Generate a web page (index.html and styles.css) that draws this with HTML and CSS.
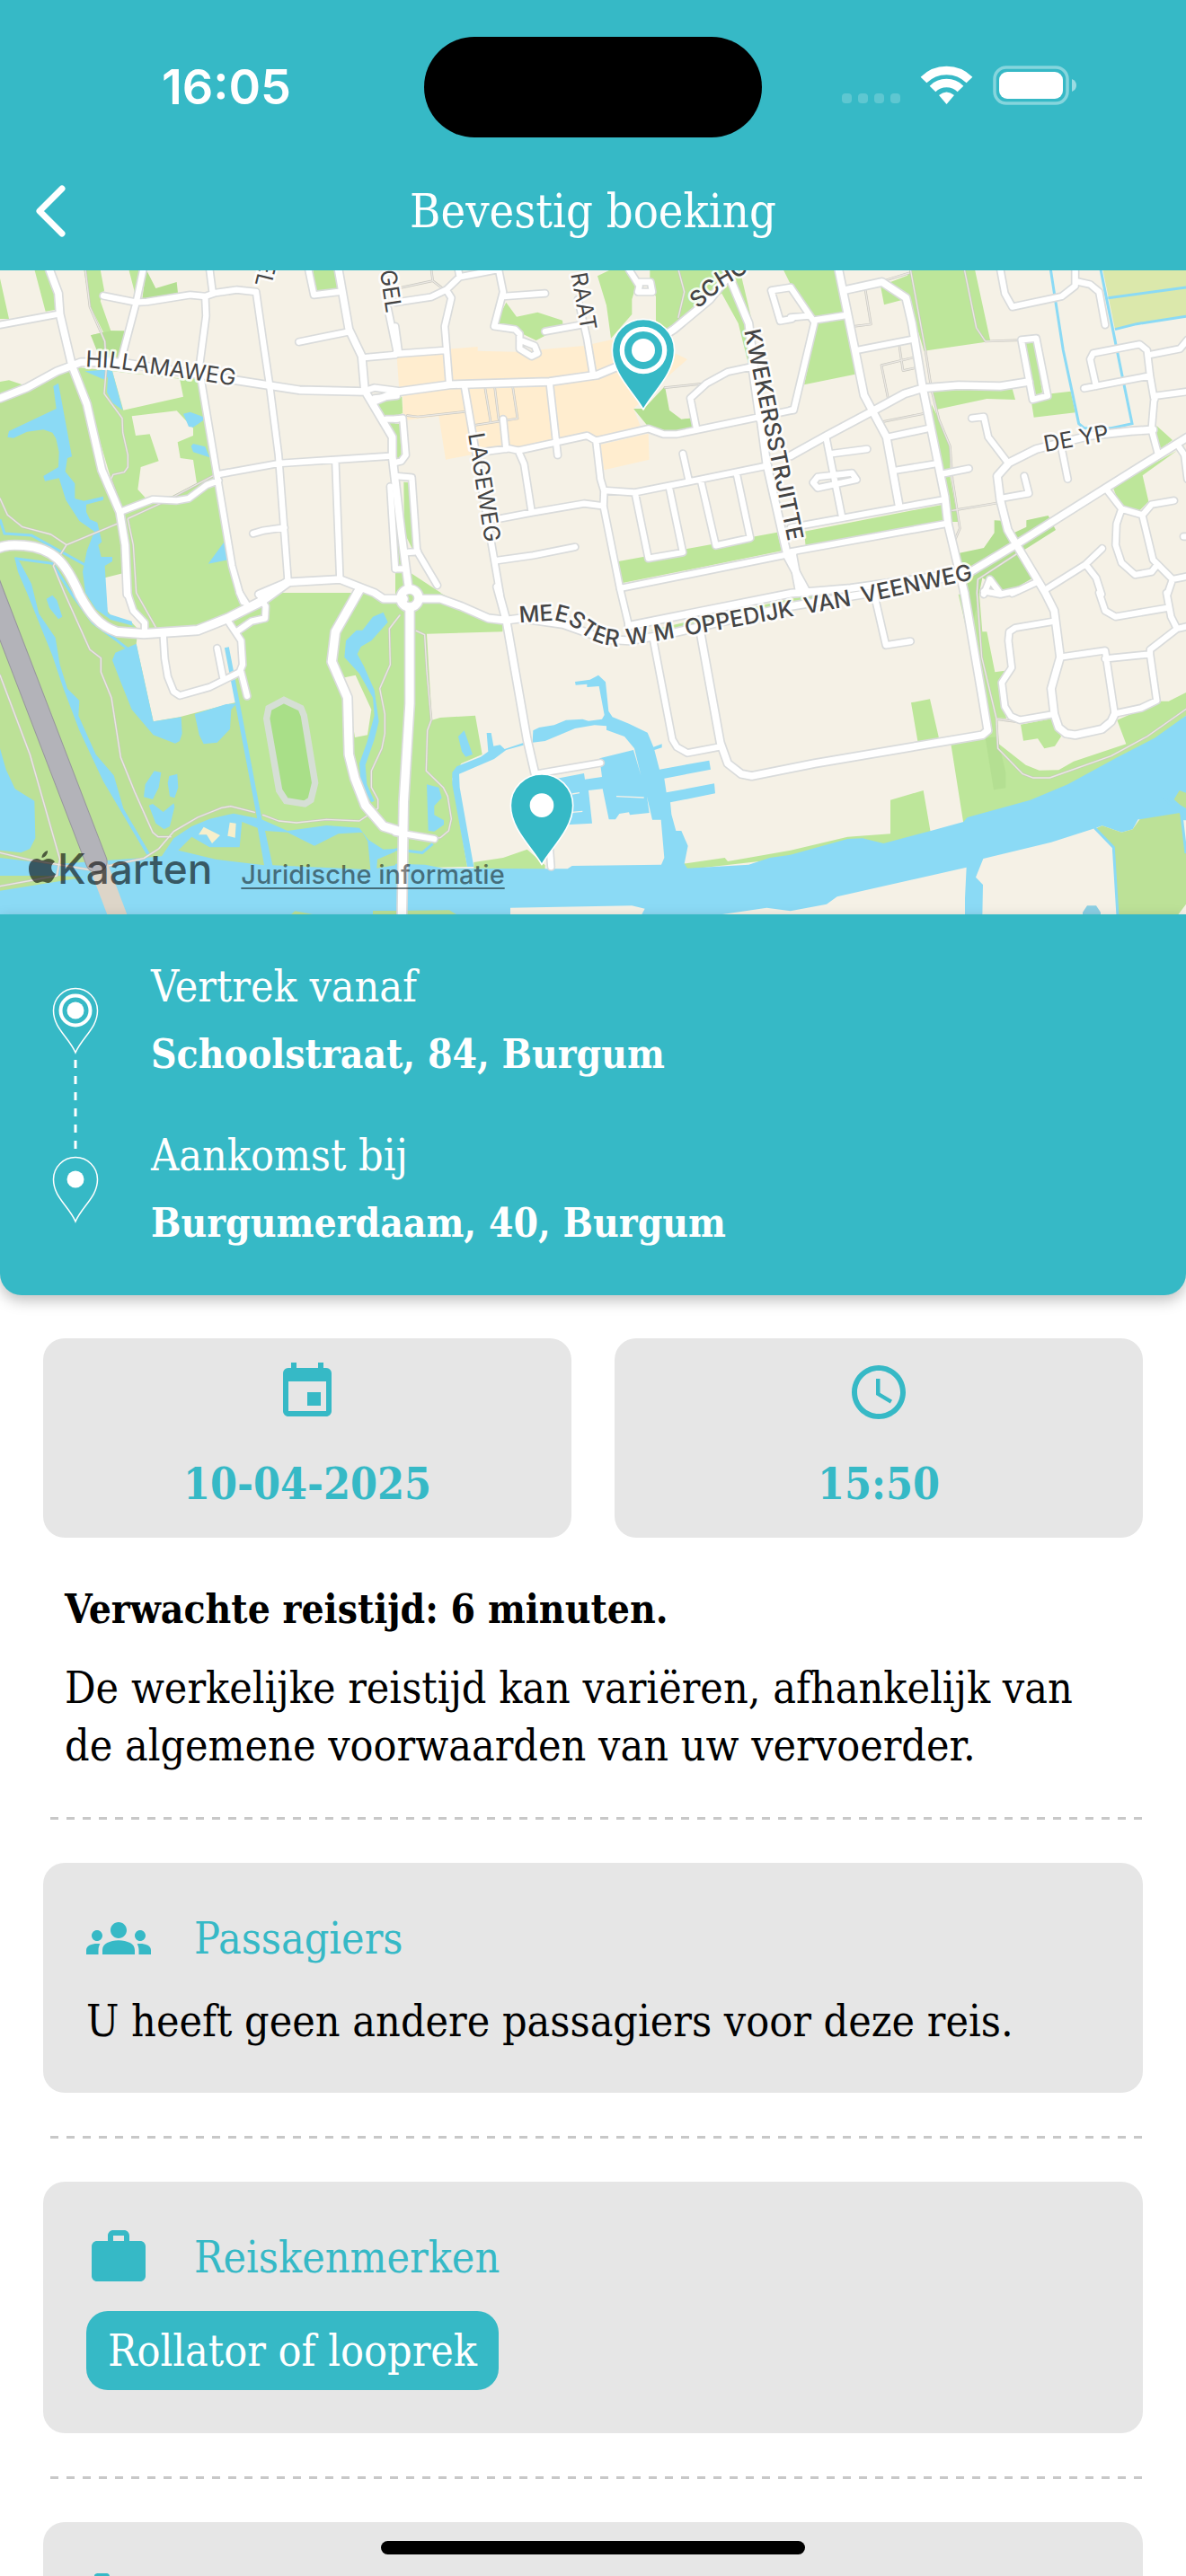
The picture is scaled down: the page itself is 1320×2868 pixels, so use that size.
FILE: index.html
```html
<!DOCTYPE html>
<html lang="nl">
    <head>
        <meta charset="UTF-8">
        <meta name="viewport" content="width=device-width, initial-scale=1.0">
        <title>Bevestig boeking</title>
        <link rel="stylesheet" href="styles.css">
    </head>
    <body>
        <div class="screen">
            <header class="header">
                <div class="status">
                    <span class="status-time">16:05</span>
                    <span class="island"></span>
                    <svg class="status-icons" viewBox="0 0 262 44" aria-hidden="true">
                        <g fill="#fff" opacity=".2">
                            <rect x="0" y="31" width="11" height="11" rx="4"/>
                            <rect x="18" y="31" width="11" height="11" rx="4"/>
                            <rect x="36" y="31" width="11" height="11" rx="4"/>
                            <rect x="54" y="31" width="11" height="11" rx="4"/>
                        </g>
                        <g fill="none" stroke="#fff" stroke-width="9.500">
                            <path d="M91 16A36 36 0 0 1 142 16"/>
                            <path d="M101 26A22 22 0 0 1 132 26"/>
                        </g>
                        <path d="M116.500 43L108 33Q116.500 26 125 33z" fill="#fff"/>
                        <rect x="170" y="2" width="81" height="40" rx="13" fill="none" stroke="#fff" stroke-width="3.500" opacity=".4"/>
                        <rect x="175" y="7" width="71" height="30" rx="9" fill="#fff"/>
                        <path d="M256 15Q261 17 261 22T256 29z" fill="#fff" opacity=".5"/>
                    </svg>
                </div>
                <div class="nav">
                    <button class="back" aria-label="Terug">
                        <svg viewBox="0 0 36 60"><path d="M31 5L6 30L31 55" fill="none" stroke="#fff" stroke-width="7" stroke-linecap="round" stroke-linejoin="round"/></svg>
                    </button>
                    <h1>Bevestig boeking</h1>
                </div>
            </header>

            <div class="map">
                <svg class="map-canvas" viewBox="0 3 3960 2151" role="img" aria-label="Kaart van Burgum">
                    <defs>
                        <!-- side streets -->
                        <g id="streets">
                            <path d="M0 185L190 150M478 0L455 110L405 300M345 88L455 110L490 108L635 85L685 90L720 78L790 68L855 75M700 0L710 78M685 90L688 155L665 330L690 480L725 690L775 990L800 1080L812 1110M855 75L880 250L900 385L930 620L962 1045M725 685L930 648L1310 623M400 810L510 768L590 772L630 765L690 720L730 705M845 882L880 872L950 862M1120 640L1135 1035M1030 0L1048 85L1130 75M998 242L1165 208M1208 295L1320 285M1220 405L1250 395L1325 405M1250 430L1325 422M1303 725L1320 1000M1295 130L1325 275M1290 500H1325M1190 1080L1180 1100"/>
                            <g transform="translate(1320 0)">
                                <path d="M0 110L120 92L170 68L215 25L345 0M215 25L210 0M170 68L187 95L165 190L180 380M0 190L12 280M0 282L165 270M345 0L360 75L330 190L400 200L415 215V265L455 290L475 280L465 255L415 235M360 90L500 80M500 207L620 185M610 100L640 230L660 350M230 385L255 530L320 910L350 1085M515 378L542 620M360 500L370 600M290 610L380 598L410 605L640 555L670 572L845 532L895 550L940 550L1325 470M410 605L430 650L455 810M335 835L455 812L630 782L695 790M670 572L685 700L697 740L695 790L750 1065L1330 948M697 738L800 745L1000 705L1245 655M800 745L845 965L960 945L915 730M1020 705L1070 922L1185 897L1140 685M960 615L980 705M340 972L460 955L600 927M780 0L815 55L810 75L858 75L852 42L815 42M1190 325L1110 342L1040 380L985 430L1005 530M1320 60L1255 70L1285 172L1325 165M1190 325L1215 500M0 500L25 497L35 620L20 640L0 645M0 690L55 695L72 940L140 1055M0 1000H35M40 945L75 942"/>
                            </g>
                            <g transform="translate(2640 0)">
                                <path d="M0 60L75 170L185 153M0 160L60 155M80 175L10 470H0M220 270L415 232M770 235L808 435L858 422L820 230zM118 560L172 830M140 615L255 600M75 712L90 693L205 680L220 702L90 730zM325 560L465 530M345 672L490 648M510 682L595 665M0 862L515 768M0 943L525 848M605 497L645 492L660 560L725 645M905 600L925 700M700 765L795 748L780 690M1225 610L1205 535L1213 440L1220 422L1325 408M1213 430L1200 355L1190 270L1165 250L1010 280L1000 300L1020 390M980 397L1200 355M1200 285L1300 265L1325 235M700 0L715 80L740 125L905 90L950 55V0M955 40L1000 50L1030 75L1050 185M1055 735L1105 800L1175 820L1205 785L1280 772M1105 800L1088 850L1085 920L1105 980L1150 1020L1205 1010L1225 985M1175 825L1210 970L1275 1035L1325 1025M1275 1035L1258 1085M850 1070L985 985L1040 932M985 985L1020 1030L1038 1085M1295 590L1315 620L1325 700M645 1085L665 1035L695 1075M740 1082L820 1045M1312 892H1330"/>
                            </g>
                            <g transform="translate(0 1080)">
                                <path d="M425 0L445 60L483 100V137M545 140L550 220L560 280L580 330L600 343L700 315L800 265L810 240L805 160L755 85M725 185L745 285M805 265L825 345M790 130L840 95L885 85L887 45L870 20M800 0L825 40"/>
                            </g>
                            <g transform="translate(1320 1080)">
                                <path d="M470 605L685 568M515 850L520 915M0 800L130 822M860 150L925 490L940 515L975 535L1080 515M750 -15L780 112"/>
                            </g>
                            <g transform="translate(2640 1080)">
                                <path d="M280 10L318 175L400 162M880 95L750 117L730 130L727 160L738 250L705 300L715 380L735 412L765 425L880 405M900 215L1050 193L1082 405M1050 220L1200 205L1222 360L1170 385L1085 403M1200 205V190L1290 120L1325 112M1290 120L1270 80L1255 0M1030 0L1050 60L1085 80L1260 50M645 -5L700 5L760 -8"/>
                            </g>
                        </g>
                        <!-- through roads -->
                        <g id="roads">
                            <path d="M165 0L195 80L200 150L240 320L290 450L340 670L400 810L418 920L425 1085M0 430L90 395L190 340L270 310H400L800 372L1000 403L1220 408M1130 0L1165 200L1208 290L1218 405L1310 560V625L1340 880L1365 1070M865 1085L960 1045L1135 1035L1250 1080L1280 1100H1350"/>
                            <g transform="translate(1320 0)">
                                <path d="M-70 440L0 410L180 385L515 375L675 352L740 325L930 200L1050 100L1130 0M1105 0L1130 60L1180 180L1200 350L1240 650L1310 960L1375 1080"/>
                            </g>
                            <g transform="translate(2640 0)">
                                <path d="M160 0L215 270L245 420L320 560L362 790M185 68L305 42L385 95L405 180L440 390L515 760L525 850L580 1080M0 622L120 555L270 475L380 415L440 397L560 387L700 390L795 375M1210 535L1135 540L1000 555L820 600L730 645L690 690L700 770L725 870L760 930L850 1080L880 1140L900 1295L870 1400L880 1485L895 1530L920 1550L950 1555L1040 1535L1070 1510L1082 1485M-540 1190L0 1082L200 1065L600 1010L750 920L1060 725L1325 560M5 945L30 1080"/>
                            </g>
                            <g transform="translate(1320 1080)">
                                <path d="M80 20H150L220 45L310 85L370 92L420 85L560 105L700 155L780 160L900 140L1320 45L1560 5L1860 -55M340 -20L370 90L440 490L470 620M1020 140L1085 500L1110 570L1155 605L1190 612L1400 570L1960 475L1978 460L1960 350L1900 0"/>
                            </g>
                        </g>
                        <!-- ring road -->
                        <g id="ring">
                            <path d="M-10 932C20 920 40 920 80 922C180 930 220 980 265 1085C300 1150 330 1190 390 1210L480 1217L660 1205L760 1165L870 1110L960 1045M1200 1070L1120 1210L1108 1310L1160 1430L1165 1620L1185 1700L1220 1790L1280 1860L1345 1880M1368 1130V1450L1348 1780L1342 2160"/>
                            <circle cx="1368" cy="1098" r="30"/>
                        </g>
                        <!-- foot paths -->
                        <g id="paths">
                            <path d="M285 0L300 125L350 240L355 330L348 415L408 497L410 545L427 620V660L415 677L378 685L370 700L400 780M0 765L25 820L75 860L170 885L222 920L178 990L215 1080L300 1270L337 1298V1345L372 1430L403 1630L450 1745L510 1880L528 1895H570M222 920L390 850M427 835L445 920L455 1080L520 1195M427 832L540 780L710 690"/>
                            <g transform="translate(1320 0)">
                                <path d="M0 65L125 38L160 65M120 0L125 38M300 398L318 508M332 395L345 500M392 392L408 498L265 520M40 488L75 492L230 475M945 0L965 75L945 160M900 395L1040 380"/>
                            </g>
                            <g transform="translate(2640 0)">
                                <path d="M320 35L395 12M400 0L450 270L470 400L495 500L532 590L540 700L565 865L550 900M580 0L620 195L650 240L770 236M248 60L268 183L210 190M325 430L303 320L415 293M362 250L375 338L420 328M310 508L460 478M540 805L690 780M755 950L625 1035L622 1080L638 1295L687 1500L692 1600L775 1685L810 1698H865L1070 1625L1190 1560L1325 1465M687 1502L750 1510"/>
                            </g>
                            <g transform="translate(0 1080)">
                                <path d="M0 980L190 945L200 890L100 540L0 275M0 868L100 892L300 925L480 887L530 855L580 797L660 750L740 718L770 713L850 733M878 742L930 762L990 768L1090 757L1200 762L1262 720V690L1240 650V595L1275 520L1285 470V405L1268 320L1303 240L1300 120L1335 75M1390 127L1418 140L1425 260L1440 425L1427 460L1423 595L1480 650L1495 680L1507 755L1498 795L1470 818L1450 820"/>
                            </g>
                        </g>
                        <path id="pin" d="M0 198C-28 145 -104 80 -104 0A104 104 0 0 1 104 0C104 80 28 145 0 198z"/>
                        <path id="l-hillamaweg" d="M285 325L380 330L860 399"/>
                        <path id="l-el" d="M872 -35L838 105"/>
                        <path id="l-gel" d="M1268 5L1298 200"/>
                        <path id="l-raat" d="M1906 15L1950 260"/>
                        <path id="l-lageweg" d="M1563 550L1635 1010"/>
                        <path id="l-school" d="M2330 132L2430 48L2560 -30L2700 -80"/>
                        <path id="l-kwekers" d="M2485 205L2650 1000"/>
                        <path id="l-deyp" d="M3490 610L3760 560"/>
                        <path id="l-veenweg" d="M1735 1180L1850 1172Q1890 1175 1930 1205Q1980 1250 2050 1258Q2080 1258 2200 1240L2840 1123L3320 1020"/>
                    </defs>

                    <rect class="land" width="3960" height="2160"/>

                    <!-- parks and fields -->
                    <g class="park">
                        <path d="M0 30L30 165H0zM115 0L152 140L200 132L165 0zM0 375L30 370L75 385L0 430zM280 0H335L348 70L335 105L370 205L415 207L400 300L335 270L303 220L345 210L300 120zM430 0H470L455 110L448 70zM240 325L380 340L612 365L660 340L730 700L800 1080L900 1090L820 1120H420V900L400 800L300 460zM1045 0H1115L1130 70L1050 80zM1255 435L1320 430V620z"/>
                        <path d="M0 1080H1320V2000H0z"/>
                        <g transform="translate(1320 0)">
                            <path d="M675 22L720 0H770L805 50L790 100V150L720 230L705 120zM850 0H1150L1195 190L1180 320L1145 180L1090 80L1000 130L870 230V90L850 60zM370 110L405 158L475 143L558 170L560 190L470 237L425 215L330 190zM0 420L22 425L25 480L0 490zM0 515H15L20 630H0zM28 710L45 712L60 940L30 880zM0 800L30 1000L152 1080H0zM745 975L1275 878L1290 940L755 1048zM1295 0H1320V50z"/>
                            <path d="M0 1080H150L300 1165L360 1180L358 1210L105 1217L122 1505L150 1497L267 1490L290 1620L220 1650L190 1700L240 1995L0 2000zM262 1980L360 1965L440 1937L500 1990V2005H262zM960 1985L1100 1965L1110 1977L1320 1940V1965L970 2005zM850 1205L1320 1100V1130L1000 1200z"/>
                        </g>
                        <g transform="translate(2640 0)">
                            <path d="M0 0H165L215 350L45 385L90 180L60 160L0 60zM300 55L390 20L400 0H615L667 240L445 272L400 120L380 100L312 118zM470 405L740 398L750 435L655 432L490 467zM785 245H815L840 410L808 430zM805 450L870 415L935 407L950 478L812 494zM470 450L495 500L532 590V690L560 843H525zM45 875L510 785L515 840L50 925zM1075 725L1290 605L1175 688L1195 775L1160 810L1100 790zM1222 522L1275 570L1225 605z"/>
                            <path d="M560 1085H630L640 1210H655L682 1345L715 1340L700 1380L720 1500L690 1498L695 1585L785 1655L830 1673L895 1672L945 1643L1120 1585L1090 1505L1170 1470L1230 1442H1262L1320 1413V1490L1215 1580L800 1800L577 1850L535 1585L650 1560L660 1520zM402 1447L465 1435L495 1565L425 1580zM333 1772L443 1740L468 1885L310 1930L0 1965V1940L190 1895L333 1885zM768 1520L875 1500L903 1560L882 1592L847 1600L825 1567L777 1574zM0 1100L240 1060L200 1090L0 1120z"/>
                        </g>
                    </g>
                    <g class="wood">
                        <path d="M488 0L520 63L590 42L594 78L475 98zM303 220L370 205H415L400 300H335z"/>
                        <path d="M2115 465L2150 465L2220 390L2235 470L2275 500L2305 497L2315 530L2260 550L2160 520z"/>
                        <path d="M3200 948L3285 930L3320 880V838L3360 840L3385 880L3427 860V838L3500 822L3525 870L3415 940L3430 1000L3450 1030L3380 1070L3340 1068L3280 1030L3250 1180L3225 1080z"/>
                        <path d="M3290 1565L3330 1560L3358 1680V1732L3318 1738z"/>
                    </g>
                    <g class="meadow">
                        <path d="M0 430L180 340L240 320L300 460L330 640L400 800L420 900L430 1220H660L800 1450L880 1960V2000H0z"/>
                    </g>
                    <path fill="#dbe8ab" d="M3682 0H3960V160L3795 182L3723 200z"/>
                    <g class="land">
                        <path d="M440 490L590 472L645 530V555L593 577L602 630L645 636L657 715L575 757L485 762L460 735L470 660L530 640L500 550L453 555zM375 340L600 365L612 425L412 470zM350 1030L410 1015L440 1140L480 1180V1220L440 1180L370 1155L358 1140z"/>
                        <path d="M455 1250L460 1210L660 1205L755 1165L790 1220L810 1280L800 1350L785 1370L790 1445L600 1495L512 1510zM1140 1365L1187 1355L1240 1470L1227 1555L1185 1563L1165 1430zM810 1080H900L830 1115zM1240 1080H1320V1100z"/>
                    </g>
                    <g class="shops">
                        <path d="M1325 290L1510 265L1595 258V272L1720 275L1950 255L2040 235L2170 240L2295 300L2250 340L2115 465L2138 522L1980 565L1735 605L1620 610L1488 635L1465 490L1345 505V415L1332 390z"/>
                        <path d="M2005 585L2165 548L2168 635L2017 670z"/>
                    </g>

                    <!-- water -->
                    <g class="water">
                        <path d="M178 390L195 380L240 625L225 630L218 675L250 715V765L280 773L345 758V770L288 785V810L300 835L325 845L340 910L328 920L338 960L375 960V975L350 990L360 1150L440 1175L455 1250L512 1510L605 1495L608 1550L600 1575L585 1583L512 1555L440 1470L400 1370L375 1305L385 1280L455 1250L445 1190L370 1170L320 1135L285 1080L276 1010L290 940L315 875L265 840L220 770L197 697L150 707L145 690L195 660L197 610L187 565L175 545L145 535L90 542L45 563L25 560L30 540L188 465zM283 340L355 335L375 340L410 470L375 445L357 410L360 360L345 367zM612 482L635 476L678 492V505L645 527L630 525zM638 590L645 582L685 592L700 628L645 610zM695 983L752 905L762 970zM48 960L65 975L105 1050L130 1150L185 1230L200 1320L225 1400L265 1440L262 1490L320 1620L380 1690L412 1800L500 1950L490 1955L345 1710L265 1540L210 1395L175 1290L90 1080L60 1010z"/>
                        <path d="M155 1100L175 1088L190 1105L208 1160L195 1168L165 1130zM650 1485L755 1452L790 1450L772 1470L768 1535L725 1580L680 1585L665 1555zM515 1675L538 1680L530 1730L510 1770L480 1762L485 1720zM565 1692L592 1685L595 1730L583 1765L567 1760L560 1715zM497 1790L510 1785L545 1812L580 1783L583 1795L567 1860L548 1870L520 1850zM1280 1145L1295 1178L1240 1240L1205 1260L1193 1285L1215 1325L1250 1405L1265 1510L1250 1570L1220 1655L1225 1720L1250 1775L1240 1780L1205 1720L1200 1650L1225 1580L1250 1490L1245 1430L1200 1350L1150 1295L1155 1240L1190 1205H1210L1245 1160zM0 1600L20 1670L50 1735L115 1775L118 1900L100 1935L70 1948L0 1940z"/>
                        <path d="M0 1965L100 1977L200 1985L480 1965L540 1960L580 1900L640 1860L700 1835L780 1817L870 1835L960 1875L1090 1857L1200 1865L1230 1905L1280 1937L1320 1935V2160H0z"/>
                        <path d="M1530 1560L1550 1540L1578 1620L1555 1628L1542 1610zM1425 1720L1465 1730L1475 1765L1450 1792V1822L1482 1840V1855L1450 1877L1430 1875z"/>
                        <path transform="translate(1320 1080)" d="M0 905L100 908L160 920L490 922H575L590 912L888 908L898 885L887 758H858L840 680L848 735L783 742L780 733L748 738L735 757H713L692 655L645 660L657 770L570 775L540 620L630 603L633 623L690 615L682 553L795 525L820 610L798 520L765 480L705 458V445L665 442L600 453L500 495L458 500L370 525L330 555L213 605L215 650L262 915H240L190 640V600L205 580L285 548L310 530L305 468H320L328 512L350 508L365 522L430 500L458 500L460 460L480 450L530 442L570 425L625 422L645 428L690 422L698 408L680 312L640 315V305L602 308L600 297L650 290L678 275L702 298L712 395L725 415L780 437L842 467L862 515L890 505V517L865 525L882 590L1048 560L1053 590L898 620L905 667L1065 637L1068 670L918 700L922 740L937 795H955L977 845L965 905L975 920L1180 908L1250 885L1320 875V1080H0z"/>
                        <path transform="translate(2640 1080)" d="M-1 875L190 822L240 820L310 837L468 795L577 765L590 750L800 692L925 640L1090 550L1215 485L1320 410V760L1160 757L1142 790L1105 800L1040 778L1015 787L870 833L643 888L618 950L642 975L640 1080H582V1020L587 917L155 1015L120 1040L-1 1063z"/>
                    </g>
                    <g class="stream">
                        <path d="M0 835L15 882L105 888L290 990M50 965L175 982L240 1085L310 1180L385 1235L430 1270M1320 1937L1410 1948L1445 1918"/>
                        <path stroke-width="15" d="M757 1262L797 1470L875 1880L895 1990"/>
                        <path d="M3508 0L3525 110L3550 270L3580 410L3602 515L3620 530H3710L3780 515L3750 370L3675 0M3700 95L3960 60M3723 200L3795 182L3960 157"/>
                    </g>
                    <path class="jetty" d="M2058 1760L2150 1764M1910 1752L1935 1748M1910 1813L1945 1810"/>
                    <g class="meadow">
                        <path d="M885 1875L960 1880L1050 1925L1130 1885L1210 1880L1228 1910L1237 2005L910 1990zM595 1940L640 1895L700 1930H800L808 1845L860 1865L882 1990L720 1970zM1260 1970L1320 1945V1990L1258 2000zM0 2025L200 2025L280 2030L0 2075zM965 2160L985 2143L1050 2155zM1245 2142H1320L1500 2140L1525 2155H1245z"/>
                        <path d="M3680 1858L3745 1880L3782 1870L3805 1837L3940 1815L3960 1930V2120L3930 2160H3735L3715 1930L3660 1867zM3920 1770L3938 1740L3960 1748V1800L3940 1788z"/>
                    </g>
                    <path class="stream" d="M3655 1865L3718 1930L3732 2160M3880 1760L3944 1815L3960 1950"/>
                    <path fill="#8bcfe3" d="M3615 2147L3630 2125H3660L3675 2147V2160H3615z"/>
                    <path class="land" d="M1704 2132L2110 2125L2153 2135L2140 2160H1704zM2405 2155L2560 2132L2640 2143V2160z"/>
                    <path fill="#f7efcb" d="M680 1862L735 1890L708 1917L690 1888L663 1888zM767 1847L788 1850L785 1898L760 1892z"/>
                    <path fill="#a9df88" stroke="#d6dfd5" stroke-width="22" d="M948 1438L1005 1465L1015 1490L1052 1715L1038 1772L1018 1785L955 1775L932 1740L890 1500L897 1465z"/>

                    <!-- roads: casing first, then the fill on top -->
                    <use href="#paths" class="path-casing"/>
                    <use href="#paths" class="path-fill"/>
                    <use href="#streets" class="street-casing"/>
                    <use href="#roads" class="road-casing"/>
                    <use href="#ring" class="ring-casing"/>
                    <use href="#streets" class="street-fill"/>
                    <use href="#roads" class="road-fill"/>
                    <use href="#ring" class="ring-fill"/>
                    <path d="M325 1980L395 2165" fill="none" stroke="#ddd5c8" stroke-width="62"/>
                    <path d="M-65 970L322 1978" fill="none" stroke="#97979c" stroke-width="74" stroke-linecap="round"/>
                    <path d="M-65 970L322 1978" fill="none" stroke="#b3b3b9" stroke-width="68" stroke-linecap="round"/>

                    <g class="label">
                        <text><textPath href="#l-hillamaweg">HILLAMAWEG</textPath></text>
                        <text><textPath href="#l-el">EL</textPath></text>
                        <text><textPath href="#l-gel">GEL</textPath></text>
                        <text><textPath href="#l-raat">RAAT</textPath></text>
                        <text><textPath href="#l-lageweg">LAGEWEG</textPath></text>
                        <text><textPath href="#l-deyp">DE YP</textPath></text>
                    </g>
                    <g class="label label-strong">
                        <text><textPath href="#l-school">SCHOOL</textPath></text>
                        <text><textPath href="#l-kwekers">KWEKERSSTRJITTE</textPath></text>
                        <text>
                            <textPath href="#l-veenweg">MEESTER</textPath>
                            <textPath href="#l-veenweg" startOffset="380">W M</textPath>
                            <textPath href="#l-veenweg" startOffset="580">OPPEDIJK</textPath>
                            <textPath href="#l-veenweg" startOffset="985">VAN</textPath>
                            <textPath href="#l-veenweg" startOffset="1180">VEENWEG</textPath>
                        </text>
                    </g>

                    <g transform="translate(2148 270)">
                        <use href="#pin" class="map-pin"/>
                        <circle r="71" fill="none" stroke="#fff" stroke-width="16"/>
                        <circle r="39" fill="#fff"/>
                    </g>
                    <g transform="translate(1809 1790)">
                        <use href="#pin" class="map-pin"/>
                        <circle r="40" fill="#fff"/>
                    </g>
                </svg>
                <div class="attribution">
                    <span class="brand"><svg viewBox="0 0 30 37" aria-hidden="true"><path d="M15 11C17 11 19 9 22 9C25 9 27.500 10.500 29 12.500C23 16 24.500 24 30 26C28.500 30 25.500 36 21.500 36C19 36 18 34.500 15.500 34.500S11.500 36 9.500 36C5 36 0 28 0 20.500C0 13 4.500 9 9 9C11.500 9 13.500 11 15 11zM14.500 8C14.500 4 17.500 1 21 0C21.500 4 18 8 14.500 8z"/></svg>Kaarten</span>
                    <a class="legal" href="#">Juridische informatie</a>
                </div>
            </div>

            <section class="route">
                <svg class="route-line" viewBox="0 0 56 264" aria-hidden="true">
                    <g fill="none" stroke="#fff">
                        <path stroke-width="1.500" d="M28 73C21 56 3.500 46 3.500 26A24.500 24.500 0 0 1 52.500 26C52.500 46 35 56 28 73z"/>
                        <circle cx="28" cy="26" r="16.500" stroke-width="4"/>
                        <path stroke-width="3" stroke-dasharray="9 9" d="M28 81V184"/>
                        <path stroke-width="1.500" d="M28 261C21 244 3.500 234 3.500 214A24.500 24.500 0 0 1 52.500 214C52.500 234 35 244 28 261z"/>
                    </g>
                    <circle cx="28" cy="26" r="9.500" fill="#fff"/>
                    <circle cx="28" cy="214" r="9.500" fill="#fff"/>
                </svg>
                <dl class="stops">
                    <div class="stop">
                        <dt>Vertrek vanaf</dt>
                        <dd>Schoolstraat, 84, Burgum</dd>
                    </div>
                    <div class="stop">
                        <dt>Aankomst bij</dt>
                        <dd>Burgumerdaam, 40, Burgum</dd>
                    </div>
                </dl>
            </section>

            <main class="content">
                <div class="when">
                    <div class="tile">
                        <svg class="icon" viewBox="0 0 24 24" aria-hidden="true"><path d="M17 12h-5v5h5v-5zM16 1v2H8V1H6v2H5c-1.110 0-1.990.9-1.990 2L3 19c0 1.100.89 2 2 2h14c1.100 0 2-.9 2-2V5c0-1.100-.9-2-2-2h-1V1h-2zm3 18H5V8h14v11z"/></svg>
                        <span>10-04-2025</span>
                    </div>
                    <div class="tile">
                        <svg class="icon" viewBox="0 0 24 24" aria-hidden="true"><path d="M11.990 2C6.470 2 2 6.480 2 12s4.470 10 9.990 10C17.520 22 22 17.520 22 12S17.520 2 11.990 2zM12 20c-4.420 0-8-3.580-8-8s3.580-8 8-8 8 3.580 8 8-3.580 8-8 8zm.5-13H11v6l5.250 3.150.75-1.230-4.500-2.670z"/></svg>
                        <span>15:50</span>
                    </div>
                </div>
                <div class="travel-time">
                    <h2>Verwachte reistijd: 6 minuten.</h2>
                    <p>De werkelijke reistijd kan variëren, afhankelijk van de algemene voorwaarden van uw vervoerder.</p>
                </div>
                <hr>
                <section class="card">
                    <div class="card-head">
                        <svg class="icon" viewBox="0 0 24 24" aria-hidden="true"><path d="M12 12.750c1.630 0 3.070.39 4.240.9 1.080.48 1.760 1.560 1.760 2.730V18H6v-1.610c0-1.180.68-2.260 1.760-2.730 1.170-.52 2.610-.91 4.240-.91zM4 13c1.100 0 2-.9 2-2s-.9-2-2-2-2 .9-2 2 .9 2 2 2zm1.130 1.100c-.37-.06-.74-.1-1.130-.1-.99 0-1.930.21-2.780.58C.48 14.900 0 15.620 0 16.430V18h4.500v-1.610c0-.83.23-1.610.63-2.290zM20 13c1.100 0 2-.9 2-2s-.9-2-2-2-2 .9-2 2 .9 2 2 2zm4 3.430c0-.81-.48-1.530-1.220-1.850-.85-.37-1.790-.58-2.780-.58-.39 0-.76.04-1.130.1.400.68.630 1.460.630 2.290V18H24v-1.570zM12 6c1.660 0 3 1.340 3 3s-1.340 3-3 3-3-1.340-3-3 1.340-3 3-3z"/></svg>
                        <h2>Passagiers</h2>
                    </div>
                    <p>U heeft geen andere passagiers voor deze reis.</p>
                </section>
                <hr>
                <section class="card">
                    <div class="card-head">
                        <svg class="icon" viewBox="0 0 24 24" aria-hidden="true"><path d="M20 6h-4V4c0-1.110-.89-2-2-2h-4c-1.110 0-2 .89-2 2v2H4c-1.110 0-1.990.89-1.990 2L2 19c0 1.110.89 2 2 2h16c1.110 0 2-.89 2-2V8c0-1.110-.89-2-2-2zm-6 0h-4V4h4v2z"/></svg>
                        <h2>Reiskenmerken</h2>
                    </div>
                    <span class="chip">Rollator of looprek</span>
                </section>
                <hr>
                <section class="card">
                    <div class="card-head">
                        <svg class="icon" viewBox="0 0 24 24" aria-hidden="true"><path d="M20.010 15.380c-1.230 0-2.420-.2-3.530-.56-.35-.12-.74-.03-1.010.24l-1.570 1.970c-2.830-1.350-5.480-3.900-6.890-6.830l1.950-1.660c.27-.28.35-.67.24-1.020-.37-1.110-.56-2.300-.56-3.530 0-.54-.45-.99-.99-.99H4.190C3.650 3 3 3.240 3 3.990 3 13.280 10.730 21 20.010 21c.71 0 .99-.63.99-1.180v-3.450c0-.54-.45-.99-.99-.99z"/></svg>
                    </div>
                </section>
            </main>
            <div class="home-bar"></div>
        </div>
    </body>
</html>
```

FILE: styles.css
```css
* {
    box-sizing: border-box;
}
body {
    background: white;
    color: black;
    font-family: "Roboto Slab", "DejaVu Serif Condensed", "DejaVu Serif", serif;
    font-size: 48px;
    line-height: 64px;
    margin: 0;
}
h1, h2, p, dl, dd {
    font-size: inherit;
    font-weight: normal;
    margin: 0;
}
.screen {
    display: flex;
    flex-direction: column;
    height: 100vh;
    overflow: hidden;
}
.header, .map, .route, .content {
    flex-shrink: 0;
}

/* header */
.header {
    background: #36b9c6;
    color: white;
}
.status {
    align-items: center;
    display: grid;
    grid-template-columns: 1fr auto 1fr;
    height: 173px;
    padding: 20px 0 0;
}
.status-time {
    font-family: Inter, sans-serif;
    font-size: 54px;
    font-weight: 600;
    padding-left: 32px;
    text-align: center;
}
.island {
    background: black;
    border-radius: 56px;
    height: 112px;
    width: 376px;
}
.status-icons {
    justify-self: center;
    margin: 0 32px 4px 0;
    width: 262px;
}
.nav {
    align-items: center;
    display: grid;
    grid-template-columns: 120px 1fr 120px;
    height: 128px;
    padding-bottom: 4px;
}
.nav h1 {
    font-size: 52px;
    text-align: center;
}
.back {
    background: none;
    border: 0;
    cursor: pointer;
    height: 60px;
    padding: 0 0 0 38px;
    text-align: left;
}
.back svg {
    display: block;
    height: 60px;
}

/* map */
.map {
    position: relative;
}
.map-canvas {
    display: block;
    width: 100%;
}
.map-canvas use {
    fill: none;
    stroke-linecap: round;
    stroke-linejoin: round;
}
.land {
    fill: #f5f1e6;
}
.park {
    fill: #bde69a;
}
.wood {
    fill: #b4df92;
}
.meadow {
    fill: #bce197;
}
.shops {
    fill: #ffedcf;
}
.water {
    fill: #8bdaf5;
}
.stream {
    fill: none;
    stroke: #8bdaf5;
    stroke-width: 9px;
}
.jetty {
    fill: none;
    stroke: #f5f1e6;
    stroke-width: 4px;
}
.map-canvas .path-casing {
    stroke: #c9c8c0;
    stroke-width: 8px;
}
.map-canvas .path-fill {
    stroke: #ebe8e3;
    stroke-width: 4px;
}
.map-canvas .street-casing {
    stroke: #d9dbdb;
    stroke-width: 29px;
}
.map-canvas .street-fill {
    stroke: white;
    stroke-width: 19px;
}
.map-canvas .road-casing {
    stroke: #d9dbdb;
    stroke-width: 33px;
}
.map-canvas .road-fill {
    stroke: white;
    stroke-width: 23px;
}
.map-canvas .ring-casing {
    stroke: #d9dbdb;
    stroke-width: 38px;
}
.map-canvas .ring-fill {
    stroke: white;
    stroke-width: 28px;
}
.label {
    fill: #444;
    font-family: Inter, sans-serif;
    font-size: 75px;
    paint-order: stroke;
    stroke: rgba(255, 255, 255, .85);
    stroke-linejoin: round;
    stroke-width: 16px;
}
.label-strong {
    font-weight: 500;
}
.map-canvas .map-pin {
    fill: #36b9c6;
    stroke: white;
    stroke-width: 5px;
}
.attribution {
    align-items: baseline;
    bottom: 12px;
    color: rgba(0, 0, 0, .6);
    display: flex;
    font-family: Inter, sans-serif;
    gap: 32px;
    left: 32px;
    position: absolute;
}
.brand {
    font-size: 46px;
    font-weight: 500;
}
.brand svg {
    fill: currentColor;
    height: 37px;
    margin-right: 2px;
    width: 30px;
}
.legal {
    color: rgba(0, 0, 0, .5);
    font-size: 29px;
    font-weight: 500;
    text-underline-offset: 4px;
}

/* route */
.route {
    background: #36b9c6;
    border-radius: 0 0 24px 24px;
    box-shadow: 0 6px 16px rgba(0, 0, 0, .25);
    color: white;
    display: flex;
    gap: 56px;
    padding: 48px 56px;
    position: relative;
}
.route-line {
    height: 264px;
    margin-top: 33px;
    width: 56px;
}
.stops {
    display: grid;
    gap: 48px;
}
.stop {
    display: grid;
    gap: 12px;
}
.stop dd, .travel-time h2 {
    font-size: 44px;
    font-weight: bold;
}

/* content */
.content {
    padding: 48px;
}
.when {
    display: grid;
    gap: 48px;
    grid-template-columns: 1fr 1fr;
}
.tile, .card {
    background: #e6e6e6;
    border-radius: 24px;
}
.tile {
    align-items: center;
    color: #36b9c6;
    display: flex;
    flex-direction: column;
    font-weight: bold;
    gap: 30px;
    line-height: 72px;
    padding: 24px;
}
.icon {
    fill: #36b9c6;
    height: 72px;
    width: 72px;
}
.travel-time {
    display: grid;
    gap: 23px;
    padding: 48px 24px;
}
hr {
    background: repeating-linear-gradient(90deg, #c8c8c8 0 9px, transparent 9px 18px);
    border: 0;
    height: 3px;
    margin: 0 0 48px 8px;
}
.card {
    margin-bottom: 48px;
    padding: 48px;
}
.card-head {
    align-items: center;
    color: #36b9c6;
    display: flex;
    gap: 48px;
    margin-bottom: 24px;
}
.chip {
    background: #36b9c6;
    border-radius: 24px;
    color: white;
    display: block;
    padding: 12px 24px;
    width: fit-content;
}
.home-bar {
    background: black;
    border-radius: 8px;
    bottom: 24px;
    height: 15px;
    left: 50%;
    margin-left: -236px;
    position: fixed;
    width: 472px;
}
```
